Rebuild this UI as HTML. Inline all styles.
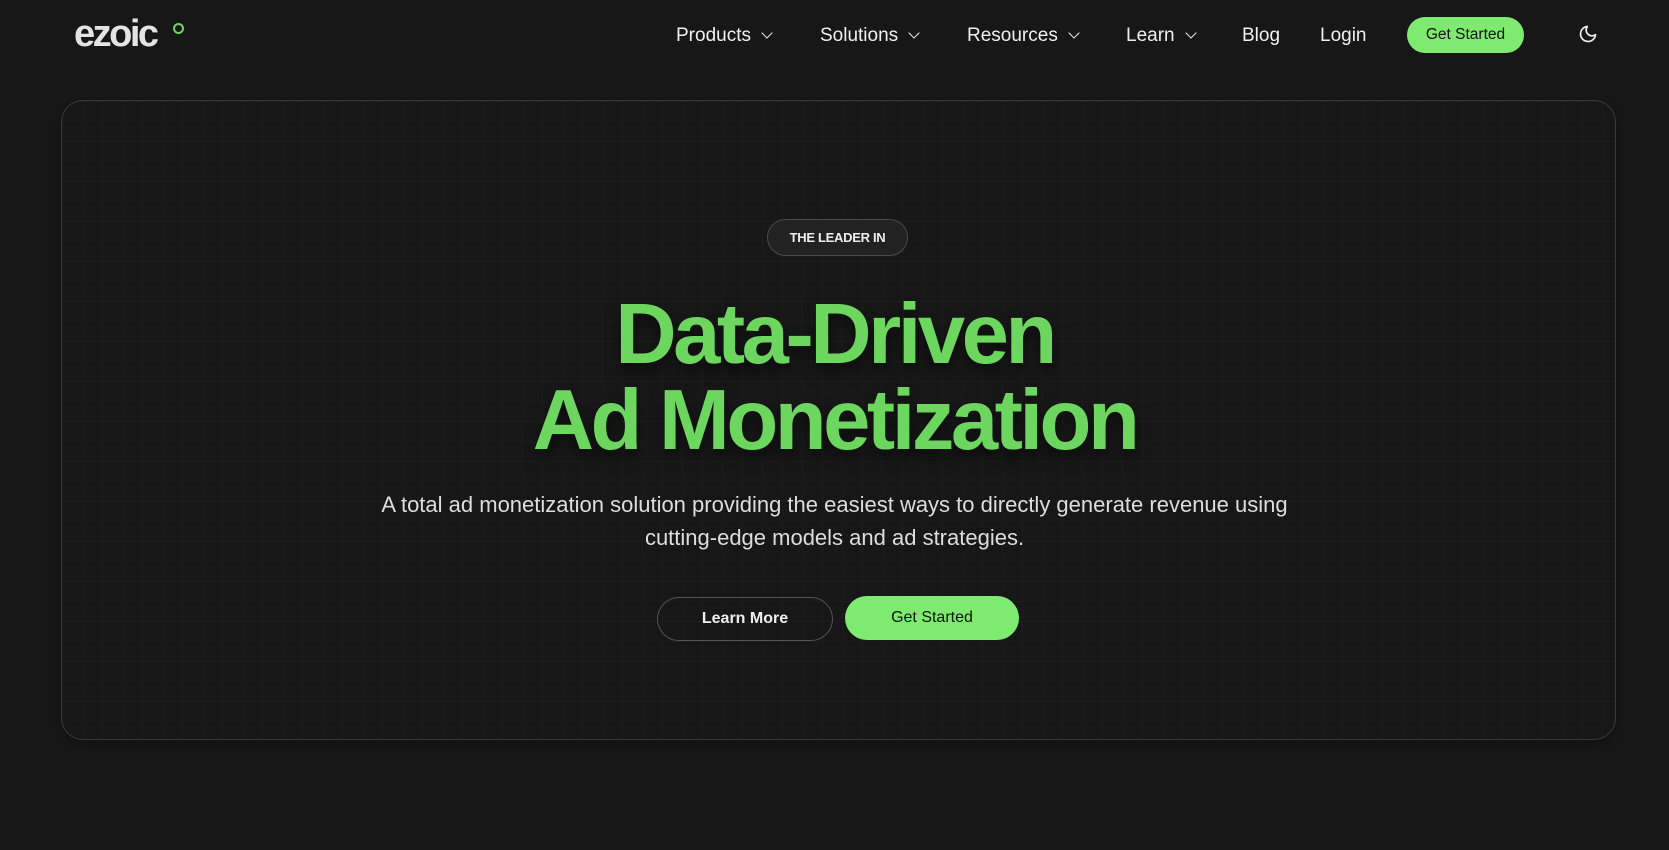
<!DOCTYPE html>
<html><head><meta charset="utf-8"><style>
*{margin:0;padding:0;box-sizing:border-box}
html,body{width:1669px;height:850px;background:#171717;overflow:hidden;font-family:"Liberation Sans",sans-serif;color:#eee}
.logo{position:absolute;left:74px;top:14px;font-weight:bold;font-size:38px;letter-spacing:-2.5px;color:#e4e4e4;line-height:40px}
.logo .r{position:absolute;left:99px;top:9px;width:11px;height:11px;border:2px solid #6cd65f;border-radius:50%}
.nav a{position:absolute;top:25px;font-size:19px;color:#f0f0f0;text-decoration:none}
.chev{display:inline-block;width:8px;height:8px;border-right:1.7px solid #eee;border-bottom:1.7px solid #eee;transform:rotate(45deg);margin-left:12px;position:relative;top:-4px}
.gs{position:absolute;left:1407px;top:17px;width:117px;height:36px;border-radius:18px;background:#7eeb70;color:#111;font-size:15.5px;text-align:center;line-height:36px}
.card{position:absolute;left:61px;top:100px;width:1555px;height:640px;border:1px solid #3a3a3a;border-radius:22px;
background-image:linear-gradient(rgba(255,255,255,.025) 1px,transparent 1px),linear-gradient(90deg,rgba(255,255,255,.025) 1px,transparent 1px);background-size:20px 20px;box-shadow:0 4px 12px rgba(0,0,0,.3)}
.pill{position:absolute;left:767px;top:219px;width:141px;height:37px;border:1px solid #4a4a4a;border-radius:19px;background:#222;font-size:13px;font-weight:bold;text-align:center;line-height:35px;color:#eee;letter-spacing:-.3px}
h1{position:absolute;left:0;width:1669px;top:292px;text-align:center;font-size:85px;line-height:86px;font-weight:bold;color:#6cd65f;letter-spacing:-3.5px;text-shadow:0 8px 14px rgba(0,0,0,.5)}
p{position:absolute;left:0;width:1669px;top:488px;text-align:center;font-size:22px;line-height:33px;color:#ddd}
.b1{position:absolute;left:657px;top:597px;width:176px;height:44px;border:1px solid #555;border-radius:22px;text-align:center;line-height:42px;font-size:16px;font-weight:bold;color:#eee}
.b2{position:absolute;left:845px;top:596px;width:174px;height:44px;border-radius:22px;background:#7eeb70;text-align:center;line-height:44px;font-size:16px;color:#111}
</style></head><body>
<div class="logo">ezoic<span class="r"></span></div>
<div class="nav">
<a style="left:676px">Products<span class="chev"></span></a>
<a style="left:820px">Solutions<span class="chev"></span></a>
<a style="left:967px">Resources<span class="chev"></span></a>
<a style="left:1126px">Learn<span class="chev"></span></a>
<a style="left:1242px;top:25px">Blog</a>
<a style="left:1320px;top:25px">Login</a>
</div>
<div class="gs">Get Started</div>
<svg style="position:absolute;left:1578px;top:24px" width="20" height="20" viewBox="0 0 24 24" fill="none" stroke="#eee" stroke-width="2" stroke-linecap="round" stroke-linejoin="round"><path d="M21 12.8A9 9 0 1 1 11.2 3a7 7 0 0 0 9.8 9.8z"/></svg>
<div class="card"></div>
<div class="pill">THE LEADER IN</div>
<h1>Data-Driven<br>Ad Monetization</h1>
<p>A total ad monetization solution providing the easiest ways to directly generate revenue using<br>cutting-edge models and ad strategies.</p>
<div class="b1">Learn More</div>
<div class="b2">Get Started</div>
</body></html>
